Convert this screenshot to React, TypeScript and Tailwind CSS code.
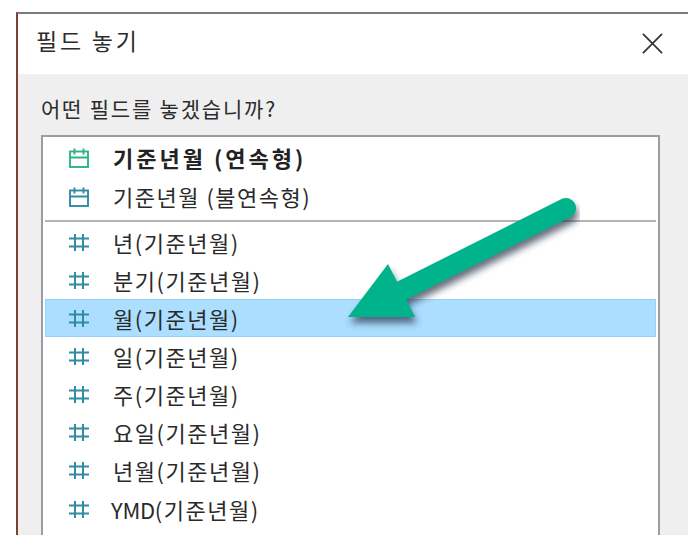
const FONT = "font-['Noto_Sans_CJK_KR','Noto_Sans',sans-serif]";

function CalendarIcon({ color }: { color: string }) {
  return (
    <svg width="20" height="20" viewBox="0 0 20 20" fill="none" stroke={color} strokeWidth="1.9">
      <rect x="1" y="3.5" width="18" height="15.5" />
      <path d="M1 9.5h18M5.5 0.5v6M14.5 0.5v6" />
    </svg>
  );
}

function HashIcon() {
  return (
    <svg width="20" height="17" viewBox="0 0 20 17" fill="none" stroke="#2f8ca3" strokeWidth="2">
      <path d="M6 0v17M14 0v17M0 4.5h20M0 12.5h20" />
    </svg>
  );
}

function Row({ label, selected = false, compact = false }: { label: string; selected?: boolean; compact?: boolean }) {
  const isYmd = label.startsWith("YMD");
  return (
    <div
      className={`flex items-center pl-[23px] ${compact ? "h-[37.5px]" : "h-[38.2px]"} ${
        selected ? "border border-[#92d2fb] bg-[#acdeff]" : "border border-transparent"
      }`}
    >
      <HashIcon />
      {isYmd ? (
        <span className="ml-[22px] text-[22px] tracking-[1.5px] text-[#2a2a2a]">
          <span className="tracking-[-0.3px]">YMD</span>(기준년월)
        </span>
      ) : (
        <span className="ml-[24px] text-[22px] tracking-[1.5px] text-[#2a2a2a]">{label}</span>
      )}
    </div>
  );
}

function Arrow() {
  return (
    <svg className="absolute left-[340px] top-[190px]" width="240" height="150" viewBox="340 190 240 150" fill="none">
      <defs>
        <filter id="arrowShadow" x="-20%" y="-20%" width="140%" height="150%">
          <feGaussianBlur stdDeviation="3.5" />
        </filter>
      </defs>
      <g filter="url(#arrowShadow)" opacity="0.7" transform="translate(2 6)">
        <path d="M566 208 L402 290.5" stroke="#26364a" strokeWidth="20" strokeLinecap="round" />
        <path d="M348 317 L388 264 L415 317 Z" fill="#26364a" />
      </g>
      <path d="M566 208 L402 290.5" stroke="#00b38a" strokeWidth="20" strokeLinecap="round" />
      <path d="M348 317 L388 264 L415 317 Z" fill="#00b38a" />
    </svg>
  );
}

export default function App() {
  return (
    <div className={`relative h-[550px] w-[688px] overflow-hidden bg-white pt-[12px] pl-[16px] ${FONT}`}>
      <div className="flex h-[523px] flex-col border-l-2 border-t-2 border-l-[#7d4037] border-t-[#7b7b7b] bg-[#efefef]">
        <div className="flex h-[60px] items-center justify-between bg-white pb-[2px] pl-[18px] pr-[25px]">
          <span className="pb-[5px] text-[23px] tracking-[2.8px] text-[#2c2c2c]">필드 놓기</span>
          <svg width="21" height="21" viewBox="0 0 22 22" fill="none" stroke="#333" strokeWidth="1.8">
            <path d="M1 1l20 20M21 1L1 21" />
          </svg>
        </div>
        <div className="flex flex-1 flex-col pl-[23px]">
          <div className="flex h-[61px] items-center pt-[8px] text-[21px] tracking-[1.8px] text-[#2c2c2c]">
            어떤 필드를 놓겠습니까?
          </div>
          <div className="h-[400px] w-[619px] border-l-2 border-r-2 border-t-2 border-[#9a9da6] bg-white px-[2px] pt-[1px]">
            <div className="flex h-[39px] items-center pl-[24px]">
              <CalendarIcon color="#2fb487" />
              <span className="ml-[24px] text-[22px] font-bold tracking-[3px] text-[#222]">기준년월 (연속형)</span>
            </div>
            <div className="flex h-[39px] items-center pl-[24px]">
              <CalendarIcon color="#2f8ca3" />
              <span className="ml-[24px] text-[22px] tracking-[1.5px] text-[#2a2a2a]">기준년월 (불연속형)</span>
            </div>
            <div className="mt-[4px] mb-[2px] h-[2px] bg-[#b4b4b4]" />
            <Row label="년(기준년월)" compact />
            <Row label="분기(기준년월)" compact />
            <Row label="월(기준년월)" selected />
            <Row label="일(기준년월)" />
            <Row label="주(기준년월)" />
            <Row label="요일(기준년월)" />
            <Row label="년월(기준년월)" />
            <Row label="YMD(기준년월)" />
          </div>
        </div>
      </div>
      <Arrow />
    </div>
  );
}
